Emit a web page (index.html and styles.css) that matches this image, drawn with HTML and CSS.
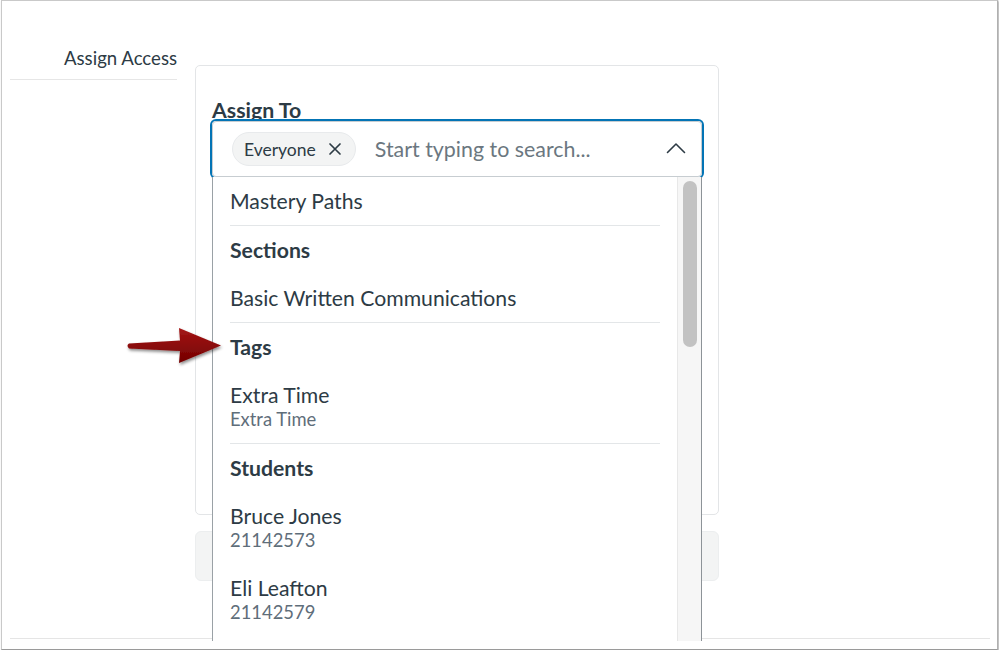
FILE: index.html
```html
<!DOCTYPE html>
<html lang="en">
<head>
<meta charset="utf-8">
<title>Assign Access</title>
<link rel="stylesheet" href="styles.css">
</head>
<body>
<div class="frame">
  <div class="content">
    <div class="row">
      <div class="sidebar">
        <div class="side-label">Assign Access</div>
      </div>
      <div class="main">
        <div class="card">
          <div class="label">Assign To</div>
          <div class="field">
            <div class="input">
              <span class="chip">Everyone
                <svg class="chip-x" width="14" height="14" viewBox="0 0 14 14"><path d="M2 2 L12 12 M12 2 L2 12" stroke="#2d3b45" stroke-width="1.7" fill="none" stroke-linecap="round"/></svg>
              </span>
              <span class="placeholder">Start typing to search...</span>
              <svg class="chevron" width="20" height="12" viewBox="0 0 20 12"><path d="M1.5 10.5 L10 2 L18.5 10.5" stroke="#2d3b45" stroke-width="1.6" fill="none" stroke-linecap="round" stroke-linejoin="round"/></svg>
            </div>
            <div class="listbox">
              <div class="list">
                <div class="opt">Mastery Paths</div>
                <div class="sep"></div>
                <div class="group">Sections</div>
                <div class="opt">Basic Written Communications</div>
                <div class="sep"></div>
                <div class="group">Tags</div>
                <div class="opt">Extra Time<div class="sub">Extra Time</div></div>
                <div class="sep"></div>
                <div class="group">Students</div>
                <div class="opt">Bruce Jones<div class="sub">21142573</div></div>
                <div class="opt">Eli Leafton<div class="sub">21142579</div></div>
              </div>
              <div class="scrollbar"><div class="thumb"></div></div>
            </div>
          </div>
        </div>
        <div class="graybox"></div>
      </div>
    </div>
    <div class="footer-line"></div>
    <svg class="arrow" width="110" height="50" viewBox="0 0 110 50">
      <defs>
        <linearGradient id="ag" x1="0" y1="0" x2="0" y2="1">
          <stop offset="0" stop-color="#a51616"/>
          <stop offset="1" stop-color="#720000"/>
        </linearGradient>
        <filter id="sh" x="-20%" y="-30%" width="140%" height="170%">
          <feDropShadow dx="1" dy="2" stdDeviation="1.6" flood-color="#000" flood-opacity="0.45"/>
        </filter>
      </defs>
      <path d="M8 21.5 Q5 23.5 8 26.5 L59 29 L58 41 L100 23.5 L58 6 L59 18.5 Z" fill="url(#ag)" filter="url(#sh)"/>
    </svg>
  </div>
</div>
</body>
</html>
```

FILE: styles.css
```css
* { box-sizing: border-box; }
html, body { margin: 0; padding: 0; background: #ffffff; }
body { font-family: Lato, "Open Sans", "Liberation Sans", sans-serif; color: #2d3b45; }

.frame {
  width: 997px;
  height: 650px;
  margin-left: 1px;
  border: 1px solid #c9c9c9;
  border-bottom-color: #9a9a9a;
  border-right-color: #b0b0b0;
  box-shadow: 1px 1px 2px rgba(0,0,0,0.35);
  background: #fff;
}

.content {
  position: relative;
  height: 640px;
  overflow: hidden;
  padding: 0 7px 0 8px;
}

.row { display: flex; }

.sidebar { width: 167px; flex: none; }
.side-label {
  height: 79px;
  border-bottom: 1px solid #e6e6e6;
  text-align: right;
  font-size: 18.6px;
  line-height: 22px;
  padding-top: 46px;
}

.main { margin-left: 18px; padding-top: 64px; width: 524px; }

.card {
  height: 450px;
  border: 1px solid #e3e5e7;
  border-radius: 5px;
  padding: 33px 16px 0 16px;
}

.label {
  font-weight: 700;
  font-size: 21.3px;
  line-height: 22px;
}

.field { position: relative; }

.input {
  height: 56px;
  border: 1px solid #c7cdd1;
  border-radius: 4px;
  box-shadow: 0 0 0 2px #0374b5;
  display: flex;
  align-items: center;
  padding: 0 15px 0 19px;
}

.chip {
  display: inline-flex;
  align-items: center;
  height: 34px;
  padding: 0 13px 0 11px;
  background: #f3f4f4;
  border: 1px solid #e8eaec;
  border-radius: 17px;
  font-size: 17.5px;
  gap: 12px;
}
.chip-x { display: block; }

.placeholder {
  margin-left: 19px;
  font-size: 21.4px;
  color: #6b7780;
  flex: 1;
}

.chevron { display: block; margin-top: -2px; }

.listbox {
  position: absolute;
  left: 0;
  top: 56px;
  width: 490px;
  height: 480px;
  background: #fff;
  border-left: 1px solid #9aa1a6;
  border-right: 1px solid #8d9398;
  display: flex;
}

.list { flex: 1; overflow: hidden; }

.opt {
  padding: 12px 17px;
  font-size: 21.2px;
  line-height: 24px;
}
.sub {
  font-size: 18.4px;
  line-height: 24px;
  color: #5f6e7a;
}
.group {
  padding: 12px 17px;
  font-size: 21.2px;
  line-height: 24px;
  font-weight: 700;
}
.sep {
  height: 1px;
  background: #e3e6e8;
  margin: 0 17px;
}

.scrollbar {
  width: 24px;
  flex: none;
  background: #f6f6f6;
  border-left: 1px solid #e8e8e8;
  padding: 4px 0 0 5px;
}
.thumb {
  width: 14px;
  height: 166px;
  border-radius: 7px;
  background: #c2c2c2;
}

.graybox {
  margin-top: 16px;
  height: 50px;
  border-radius: 6px;
  background: #f3f4f4;
  border: 1px solid #eceeef;
}

.footer-line {
  margin-top: 57px;
  height: 1px;
  background: #e5e5e5;
}

.arrow {
  position: absolute;
  left: 119px;
  top: 321px;
}
```
